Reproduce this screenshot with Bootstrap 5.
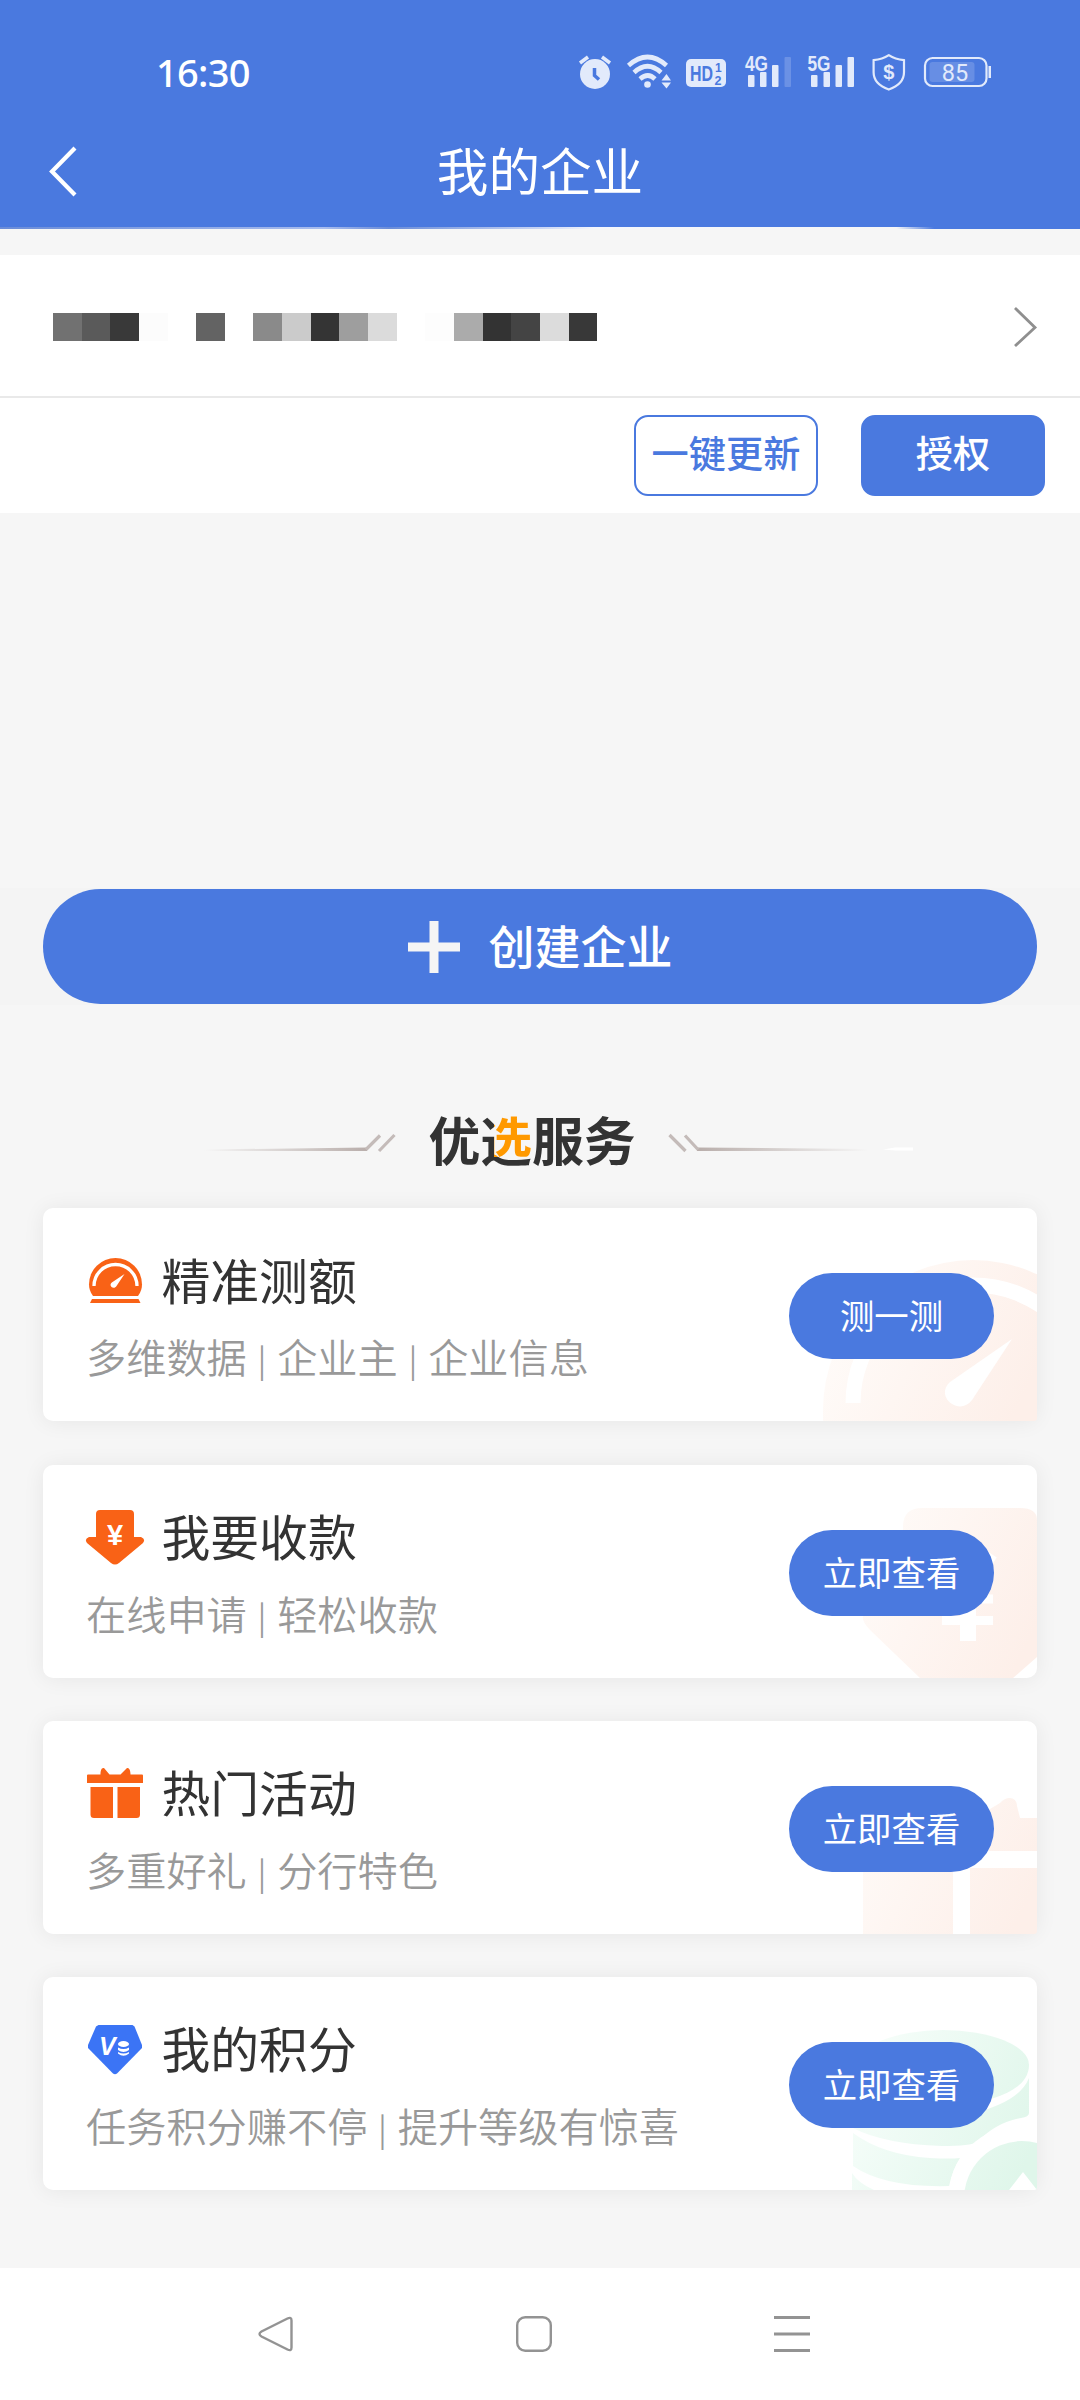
<!DOCTYPE html>
<html lang="zh-CN">
<head>
<meta charset="utf-8">
<meta name="viewport" content="width=device-width, initial-scale=1">
<title>我的企业</title>
<link href="https://cdn.jsdelivr.net/npm/bootstrap@5.3.0/dist/css/bootstrap.min.css" rel="stylesheet">
<style>
:root{--brand:#4a79df}
body{font-family:"Noto Sans CJK SC",sans-serif;background:#f6f6f6;color:#333;width:1080px;height:2400px;overflow:hidden}
svg{display:block;flex:none;overflow:visible}
.app-head{background:linear-gradient(90deg,#6a8cd8,#a9bdee 30%,#6a8cd8 36%,#c9d5f4 50%,#f4f6fc 55%,#f6f6f6 83%,#4a79df 86.5%) 0 100%/100% 2px no-repeat var(--brand);height:229px;color:#fff}
.status-row{height:100px;padding:48px 88px 0 156px}
.clock{font:500 38px/52px "Noto Sans",sans-serif;letter-spacing:-.7px;margin-top:-2px}
.status-icons{margin-top:6px;color:#e2eafb}
.g15{margin-left:15px}.g17{margin-left:17px}.g18{margin-left:18px}.g19{margin-left:19px}
.title-row{height:129px;padding:45px 48px 0 48px}
.title-row h1{font-size:51.6px;font-weight:400;line-height:60px;margin:-6px 0 0;padding-right:28px}
.company{margin-top:26px;height:258px}
.company-name{height:141px;padding:0 42px 0 53px}
.company-line{height:2px;background:#e9e9e9}
.mosaic{height:28px;margin-top:3px}
.mosaic i{width:28.65px;height:28px}
.company-acts{height:115px;padding-right:35px;gap:43px}
.act{width:184px;height:81px;border-radius:14px;font-size:37.2px;font-weight:500;line-height:70px;padding:0 0 7px;border:2px solid var(--brand)}
.act-line{color:var(--brand);background:#fff}
.act-fill,.go-btn,.create-btn{background:var(--brand);color:#fff}
.create-strip{margin-top:375px;height:117px;padding:1px 43px;background:#f4f4f4}
.create-btn{height:115px;font-size:46px;font-weight:500;gap:29px;border:0;padding:0}
.create-btn span{margin-top:-4px}
.svc-head{height:70px;margin-top:100px;padding-left:2px}
.svc-head h2{font-size:51.8px;font-weight:700;line-height:70px;margin:-3px 32px 0 32px;white-space:nowrap}
.svc-head svg:last-child{margin-right:-19px}
.svc-head svg:first-child{margin-left:17px}
.two-tone{color:transparent;background:linear-gradient(#f90,#f90) 14px 0/40px 56px no-repeat #333;-webkit-background-clip:text;background-clip:text}
.svc-list{margin:33.4px 43px 0;gap:43.2px}
.svc{height:213px;background:#fff;border-radius:10px;box-shadow:0 1px 22px rgba(0,0,0,.065);padding:44px 43px 0;position:relative}
.svc-bg{position:absolute;right:0;bottom:0;border-radius:0 10px 3px 0;overflow:hidden}
.svc-body{position:relative}
.svc h3{font-size:48.8px;font-weight:400;line-height:56px;margin:-3px 0 0 17.500px}
.svc p{font-size:40.2px;font-weight:350;line-height:56px;color:#999;margin:20px 0 0;white-space:nowrap}
.svc p span{font-size:32px;line-height:1;margin:0 2px;vertical-align:1px}
.go-btn{width:205px;height:86px;font-size:34.4px;line-height:82px;padding:0 0 4px;border:0;margin-top:21px}
.bottom-nav{height:132px;margin-top:77.600px;background:#fff;padding:0 270px 0 258px}
</style>
<script src="https://cdn.jsdelivr.net/npm/bootstrap@5.3.0/dist/js/bootstrap.bundle.min.js"></script>
</head>
<body>
<header class="app-head">
  <div class="status-row d-flex justify-content-between align-items-start">
    <div class="clock">16:30</div>
    <div class="status-icons d-flex">
      <svg width="34" height="36" viewBox="578 54 34 36"><circle cx="595" cy="74" r="15" fill="currentColor"/><path d="M580 63l8-6M610 63l-8-6" stroke="currentColor" stroke-width="3.5"/><path d="M594.5 68v7.500l4.500 4" stroke="#4a79df" stroke-width="3.500" fill="none"/></svg>
      <svg class="g15" width="44" height="36" viewBox="627 54 44 36"><g fill="none" stroke="currentColor" stroke-width="4.600"><path d="M628.500 65.500q19-17 38 0"/><path d="M634 72.500q13.500-12.500 27 0"/><path d="M640 79q8-7 15 0"/></g><circle cx="647.500" cy="84.500" r="3.300" fill="currentColor"/><path d="M661.500 80.500l5-6.500 4.500 6.500zM661.500 82.500h9.500l-4.500 6z" fill="currentColor"/></svg>
      <svg class="g15" width="40" height="36" viewBox="686 54 40 36"><rect x="686" y="59" width="40" height="28" rx="5" fill="currentColor"/><g fill="#4a79df" font-family="Liberation Sans" font-weight="700"><text x="690" y="81" font-size="22" textLength="23" lengthAdjust="spacingAndGlyphs">HD</text><text x="715" y="71.500" font-size="12">1</text><text x="714.500" y="84.500" font-size="12.500">2</text></g></svg>
      <svg class="g19" width="46" height="36" viewBox="745 54 46 36"><g fill="currentColor"><rect x="748" y="75" width="6.500" height="12" rx="1"/><rect x="760" y="72" width="6.500" height="15" rx="1"/><rect x="772" y="65" width="6.500" height="22" rx="1"/><rect x="784.500" y="57" width="6.500" height="30" rx="1" opacity=".22"/><text x="745" y="70.500" font-family="Liberation Sans" font-weight="700" font-size="21.500" textLength="23" lengthAdjust="spacingAndGlyphs">4G</text></g></svg>
      <svg class="g17" width="46" height="36" viewBox="808 54 46 36"><g fill="currentColor"><rect x="811" y="75" width="6.500" height="12" rx="1"/><rect x="823.500" y="72" width="6.500" height="15" rx="1"/><rect x="835.500" y="65" width="6.500" height="22" rx="1"/><rect x="847.500" y="57" width="6.500" height="30" rx="1"/><text x="807.500" y="70.500" font-family="Liberation Sans" font-weight="700" font-size="21.500" textLength="23" lengthAdjust="spacingAndGlyphs">5G</text></g></svg>
      <svg class="g18" width="34" height="37" viewBox="872 54 34 37"><path d="M888.800 55.200c4.500 3 9.500 4.500 15.200 5v12c0 8-6 14-15.200 17.300-9.200-3.300-15.200-9.300-15.200-17.300v-12c5.700-.5 10.700-2 15.200-5z" fill="none" stroke="currentColor" stroke-width="2.200"/><text x="888.800" y="79" text-anchor="middle" font-family="Liberation Sans" font-weight="700" font-size="20" fill="currentColor">$</text></svg>
      <svg class="g18" width="68" height="36" viewBox="924 54 68 36"><rect x="925" y="58" width="61.500" height="28" rx="7.500" fill="none" stroke="currentColor" stroke-width="2.200"/><rect x="929.500" y="62" width="45" height="20" rx="3" fill="#fff" opacity=".16"/><rect x="988.500" y="66" width="2.500" height="12" fill="currentColor"/><text x="955" y="80.500" text-anchor="middle" font-family="Roboto" font-size="23.500" font-weight="400" fill="currentColor">85</text></svg>
    </div>
  </div>
  <div class="title-row d-flex align-items-start">
    <svg width="28" height="52" viewBox="0 0 28 52"><path d="M27 3L4 26.500 27 50" fill="none" stroke="#fff" stroke-width="4.200"/></svg>
    <h1 class="flex-fill text-center">我的企业</h1>
  </div>
</header>

<section class="company bg-white">
  <div class="company-name d-flex justify-content-between align-items-center">
    <div class="mosaic d-flex">
      <i style="background:#717171"></i><i style="background:#5a5a5a"></i><i style="background:#393939"></i><i style="background:#fcfcfc"></i><i></i><i style="background:#636363"></i><i></i><i style="background:#8a8a8a"></i><i style="background:#cbcbcb"></i><i style="background:#343434"></i><i style="background:#9e9e9e"></i><i style="background:#dbdbdb"></i><i></i><i style="background:#fdfdfd"></i><i style="background:#ababab"></i><i style="background:#333"></i><i style="background:#444"></i><i style="background:#dcdcdc"></i><i style="background:#383838"></i>
    </div>
    <svg width="24" height="42" viewBox="0 0 24 42" class="mt-1"><path d="M1 1L21 20.500 1 39" fill="none" stroke="#8f8f8f" stroke-width="2.800"/></svg>
  </div>
  <div class="company-line"></div>
  <div class="company-acts d-flex justify-content-end align-items-center">
    <button class="btn act act-line">一键更新</button>
    <button class="btn act act-fill">授权</button>
  </div>
</section>

<div class="create-strip">
  <button class="btn create-btn rounded-pill w-100 d-flex align-items-center justify-content-center">
    <svg width="52" height="52" viewBox="0 0 52 52"><path d="M26 0v52M0 26h52" stroke="#f5f5f5" stroke-width="9"/></svg>
    <span>创建企业</span>
  </button>
</div>

<div class="svc-head d-flex align-items-center justify-content-center">
  <svg width="192" height="22" viewBox="206 1134 192 22" class="mt-2"><defs><linearGradient id="fadeL" gradientUnits="userSpaceOnUse" x1="206" y1="0" x2="369" y2="0"><stop stop-color="#b9aeab" stop-opacity="0"/><stop offset="1" stop-color="#b9aeab"/></linearGradient></defs><path d="M206 1150.500L369 1148.500v3.500H206z" fill="url(#fadeL)"/><path d="M368 1150.500l14-14M381 1152l15.500-16" fill="none" stroke="#c4bbb9" stroke-width="3.200"/></svg>
  <h2>优<span class="two-tone">选</span>服务</h2>
  <svg width="246" height="22" viewBox="665 1134 246 22" class="mt-2"><defs><linearGradient id="fadeR" gradientUnits="userSpaceOnUse" x1="694" y1="0" x2="865" y2="0"><stop stop-color="#b9aeab"/><stop offset="1" stop-color="#b9aeab" stop-opacity="0"/></linearGradient></defs><path d="M694 1148.500v3.500H865v-2z" fill="url(#fadeR)"/><path d="M695 1150.500l-13-14M682.500 1152l-16-16" fill="none" stroke="#c4bbb9" stroke-width="3.200"/><path d="M880 1150.500l12-2h18v3h-18z" fill="#fff"/></svg>
</div>

<main class="svc-list d-flex flex-column">
  <section class="svc">
    <svg class="svc-bg" width="240" height="213" viewBox="797 0 240 213"><defs><linearGradient id="warm" gradientUnits="userSpaceOnUse" x1="830" y1="60" x2="1037" y2="160"><stop stop-color="#fffdfb"/><stop offset="1" stop-color="#fdefe9"/></linearGradient></defs><path d="M823 213v-11a150 150 0 0 1 300 0v11z" fill="url(#warm)"/><path d="M853 195a120 118 0 0 1 240 0" fill="none" stroke="#fff" stroke-width="15"/><path d="M1012 131l-38 58c-5 9-14 12-22 7s-10-15-2-22z" fill="#fff"/></svg>
    <div class="svc-body d-flex justify-content-between align-items-start">
      <div>
        <div class="d-flex align-items-center"><svg width="58" height="56" viewBox="0 0 58 56"><path d="M7 44C4 40 3 36 3 32.500a26.500 26.500 0 0 1 53 0C56 36 55 40 52 44z" fill="#f96216"/><path d="M8 34a21.500 21.500 0 0 1 43 0" fill="none" stroke="#fff" stroke-width="3.300"/><path d="M38.500 22l-8 12c-1 2-3.500 2.400-5 1s-1.200-3.300.3-4.500z" fill="#fff"/><path d="M6 47h46.500l2 4H4z" fill="#f96216"/></svg><h3>精准测额</h3></div>
        <p>多维数据 <span>|</span> 企业主 <span>|</span> 企业信息</p>
      </div>
      <button class="btn go-btn rounded-pill">测一测</button>
    </div>
  </section>

  <section class="svc">
    <svg class="svc-bg" width="240" height="213" viewBox="797 0 240 213"><path d="M903 62q0-19 19-19h98q17 0 17 12v137l-24 21h-93l-50-48q-12-13-4-17h37z" fill="url(#warm)"/><path d="M943 90l25 38 25-38M968 128v48M943 134h50M942 155.500h51" fill="none" stroke="#fff" stroke-width="9"/><path d="M968 128v48" stroke="#fff" stroke-width="16"/></svg>
    <div class="svc-body d-flex justify-content-between align-items-start">
      <div>
        <div class="d-flex align-items-center"><svg width="58" height="56" viewBox="0 0 58 56"><path d="M14 1h30q4 0 4 4v23h7q5 2 2 6L33 54q-4 3-8 0L1 34q-3-4 2-6h7V5q0-4 4-4z" fill="#f96216"/><text x="29" y="36" text-anchor="middle" font-family="Liberation Sans" font-weight="700" font-size="29" fill="#fff">¥</text></svg><h3>我要收款</h3></div>
        <p>在线申请 <span>|</span> 轻松收款</p>
      </div>
      <button class="btn go-btn rounded-pill">立即查看</button>
    </div>
  </section>

  <section class="svc">
    <svg class="svc-bg" width="240" height="213" viewBox="797 0 240 213"><path d="M975 97l25-15c7-8 17-6 17 3l3 12h17v33H850V97zM863 147h90v66h-90zM970 147h67v66h-67z" fill="url(#warm)"/></svg>
    <div class="svc-body d-flex justify-content-between align-items-start">
      <div>
        <div class="d-flex align-items-center"><svg width="58" height="56" viewBox="0 0 58 56"><path d="M2 9.500h12.500c0-3 .5-7 3.500-6.500l5.500 6.500h11L41 3c2.500-.5 3.500 3 3.500 6.500H56q1 0 1 1V18H1v-7.500q0-1 1-1zM4.500 22H27v31H8q-3.500 0-3.500-3.500zM31.500 22H54v27.500q0 3.500-3.500 3.500h-19z" fill="#f96216"/></svg><h3>热门活动</h3></div>
        <p>多重好礼 <span>|</span> 分行特色</p>
      </div>
      <button class="btn go-btn rounded-pill">立即查看</button>
    </div>
  </section>

  <section class="svc">
    <svg class="svc-bg" width="240" height="213" viewBox="797 0 240 213"><defs><linearGradient id="mint" gradientUnits="userSpaceOnUse" x1="850" y1="80" x2="1037" y2="160"><stop stop-color="#f8fefb"/><stop offset="1" stop-color="#dff6ea"/></linearGradient></defs><g fill="url(#mint)"><path d="M857 88a86 35 0 0 1 172 0c0 16-15 27-35 33q-50 14-102 0c-22-6-35-17-35-33z"/><path d="M853 108q85 48 145 20 24-10 31-27v35q0 4-8 5-24 4-44 24-6 4-35 4-58-2-89-18z"/><path d="M853 156q30 22 77 25 20 1 30 0-8 12-10 28-65 2-97-20z"/><path d="M852 196q6 10 22 17h-22z"/></g><circle cx="1022" cy="222" r="74" fill="#fff"/><circle cx="1022" cy="222" r="58" fill="url(#mint)"/><path d="M1023 195l14 18h-28z" fill="#fff"/></svg>
    <div class="svc-body d-flex justify-content-between align-items-start">
      <div>
        <div class="d-flex align-items-center"><svg width="58" height="56" viewBox="0 0 58 56"><path d="M12.500 4h34l2 1.500L56 24v3L31 52.500q-2 1.500-4 0L2 27v-3l8-18.500z" fill="#3b74f5"/><text x="13" y="34" font-family="Liberation Sans" font-weight="700" font-style="italic" font-size="25" fill="#fff">V</text><g fill="#fff"><ellipse cx="37.500" cy="23" rx="5.500" ry="3"/><path d="M32 26.500q5.500 3 11 0v2.500q-5.500 4-11 0zM32 31q5.500 3 11 0v1.500q-5.500 4.500-11 0z"/></g></svg><h3>我的积分</h3></div>
        <p>任务积分赚不停 <span>|</span> 提升等级有惊喜</p>
      </div>
      <button class="btn go-btn rounded-pill">立即查看</button>
    </div>
  </section>
</main>

<nav class="bottom-nav d-flex justify-content-between align-items-center">
  <svg width="36" height="38" viewBox="0 0 36 38"><path d="M29.500 3.500L3.500 16.500q-4 2.500 0 5l26 13q4 2 4-2v-27q0-4-4-2z" fill="none" stroke="#939393" stroke-width="2.400"/></svg>
  <svg width="36" height="36" viewBox="0 0 36 36"><rect x="1.200" y="1.200" width="33.600" height="33.600" rx="8" fill="none" stroke="#939393" stroke-width="2.400"/></svg>
  <svg width="36" height="36" viewBox="0 0 36 36"><path d="M0 1.500h36M0 18h36M0 34.500h36" stroke="#939393" stroke-width="3"/></svg>
</nav>
</body>
</html>
